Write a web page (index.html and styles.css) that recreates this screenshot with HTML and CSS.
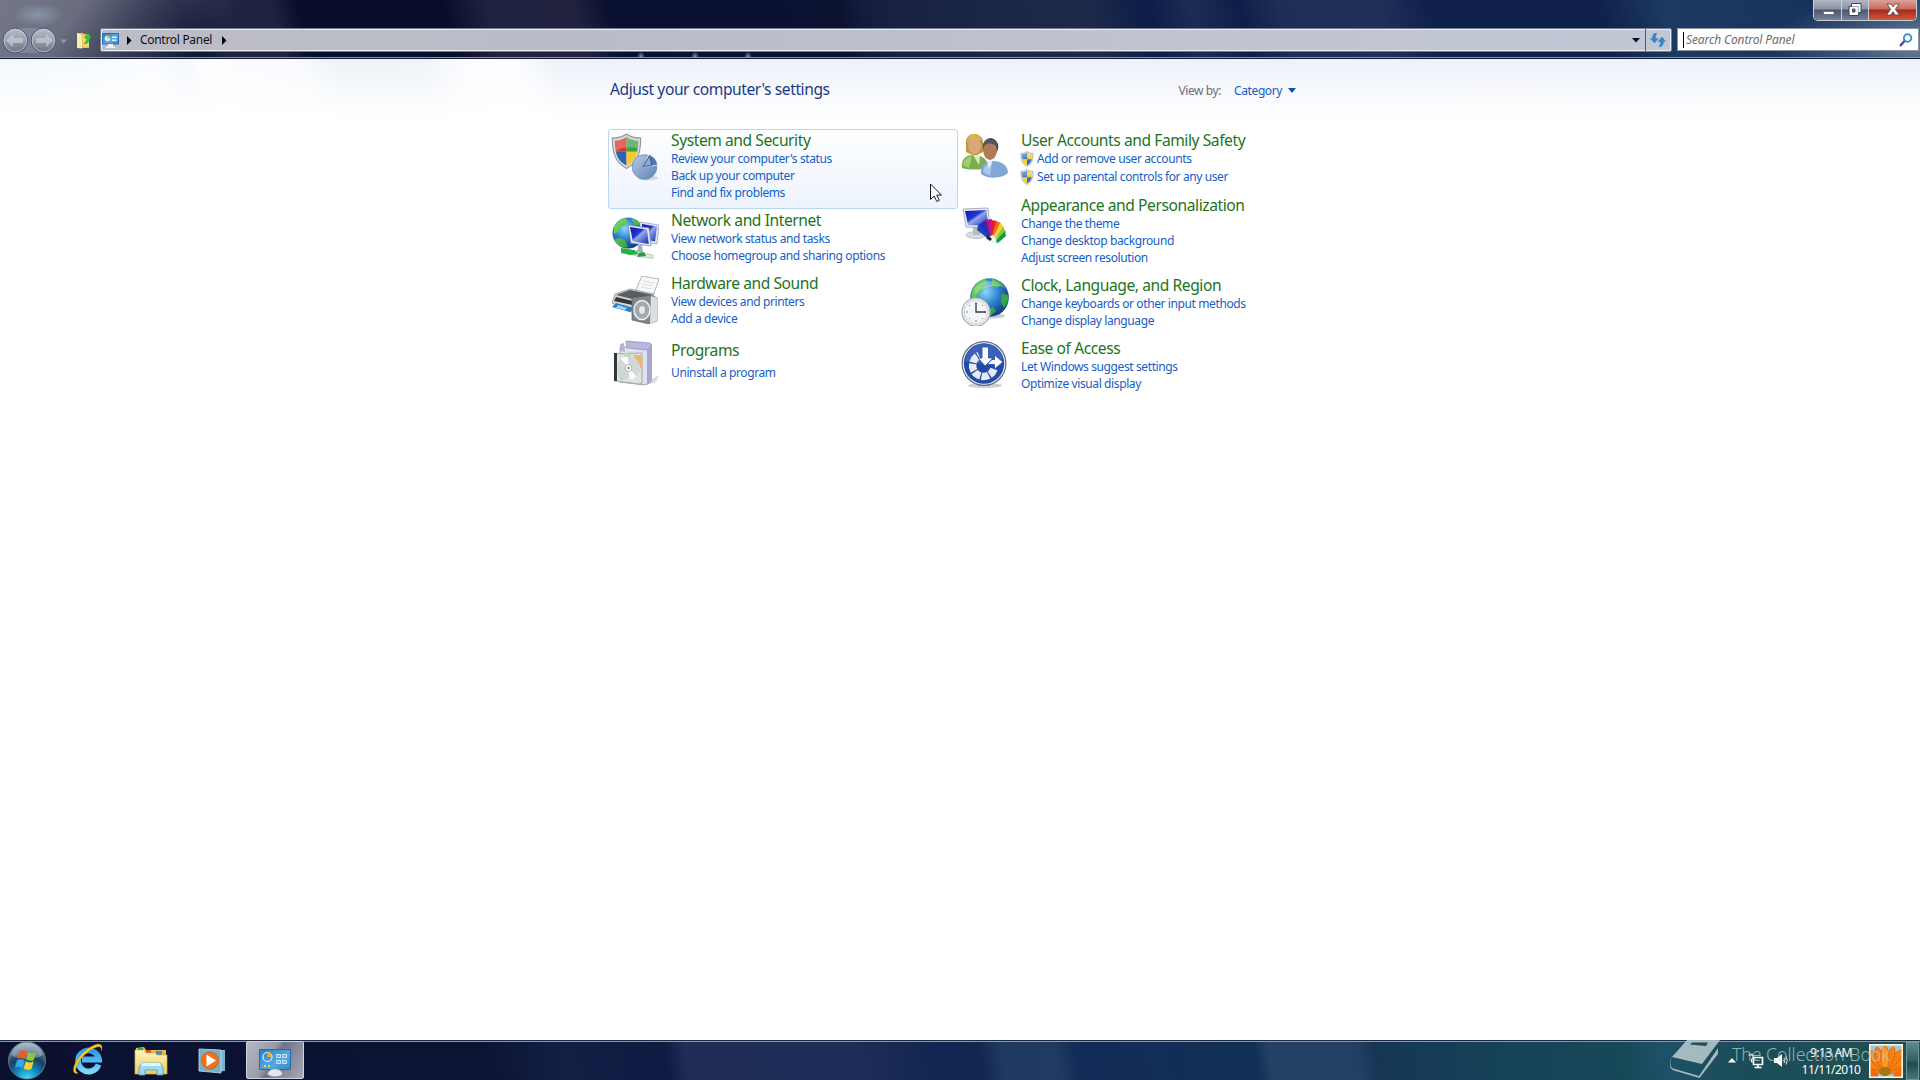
FILE: index.html
```
<!DOCTYPE html>
<html lang="en">
<head>
    <meta charset="UTF-8">
    <meta name="viewport" content="width=device-width, initial-scale=1.0">
    <title>Control Panel</title>
    <link rel="stylesheet" href="styles.css">
</head>
<body>
    <svg class="defs" width="0" height="0">
        <defs>
            <linearGradient id="steel" x1="0" y1="0" x2="0" y2="1">
                <stop offset="0" stop-color="#b9bfcb"/><stop offset=".45" stop-color="#9aa1b0"/><stop offset="1" stop-color="#6a7182"/>
            </linearGradient>
            <radialGradient id="globe" cx=".4" cy=".35" r=".65">
                <stop offset="0" stop-color="#8fd6fb"/><stop offset=".5" stop-color="#2f86cf"/><stop offset="1" stop-color="#123f86"/>
            </radialGradient>
            <linearGradient id="screen" x1="0" y1="0" x2="1" y2="1">
                <stop offset="0" stop-color="#0a1aa8"/><stop offset=".4" stop-color="#2038d0"/><stop offset=".5" stop-color="#93a8ee"/><stop offset="1" stop-color="#1226b4"/>
            </linearGradient>
            <linearGradient id="land" x1="0" y1="0" x2="1" y2="1">
                <stop offset="0" stop-color="#7fd96a"/><stop offset="1" stop-color="#1f8f3c"/>
            </linearGradient>
            <linearGradient id="pie" x1="0" y1="0" x2="1" y2="1">
                <stop offset="0" stop-color="#b9cce4"/><stop offset="1" stop-color="#5c80b4"/>
            </linearGradient>
            <linearGradient id="panel" x1="0" y1="0" x2="1" y2="1">
                <stop offset="0" stop-color="#2c7fc4"/><stop offset=".6" stop-color="#55aae2"/><stop offset="1" stop-color="#3186c8"/>
            </linearGradient>
            <radialGradient id="orb" cx=".5" cy="1" r="1">
                <stop offset="0" stop-color="#3fe0ff"/><stop offset=".35" stop-color="#1180b4"/><stop offset=".6" stop-color="#15405f"/><stop offset="1" stop-color="#93a7b5"/>
            </radialGradient>
            <linearGradient id="ie" x1="0" y1="0" x2="0" y2="1">
                <stop offset="0" stop-color="#2f9be4"/><stop offset="1" stop-color="#7ad6fa"/>
            </linearGradient>
            <linearGradient id="folder" x1="0" y1="0" x2="0" y2="1">
                <stop offset="0" stop-color="#fdf6bd"/><stop offset="1" stop-color="#edcb62"/>
            </linearGradient>
            <symbol id="shield" viewBox="0 0 30 36">
                <path d="M15 1C11 4 6 5 1 5c0 13 2 24 14 30C27 29 29 18 29 5 24 5 19 4 15 1z" fill="#d5d8d4" stroke="#8d928f"/>
                <path class="s1" d="M15 4C11 6.500 8 7.500 3.500 8c0 4 .3 7 1 10.500H15z"/>
                <path class="s2" d="M15 4c4 2.500 7 3.500 11.500 4 0 4-.3 7-1 10.500H15z"/>
                <path class="s3" d="M4.500 18.500C6 25 9 29 15 32V18.500z"/>
                <path class="s4" d="M25.500 18.500C24 25 21 29 15 32V18.500z"/>
                <path d="M3.500 8C8 7.500 11 6.500 15 4c4 2.500 7 3.500 11.500 4 0 3-.2 5-.5 7-8-2-15-1-22 3-.4-3-.5-6-.5-10z" fill="#fff" opacity=".25"/>
            </symbol>
        </defs>
    </svg>

    <header class="titlebar">
        <div class="caption">
            <div class="window-buttons">
                <span class="win-btn min">
                    <svg width="27" height="20" viewBox="0 0 27 20"><path d="M9.500 11.500h10.500v3h-10.500z" fill="#fff" stroke="#555d6c" stroke-width=".7"/></svg>
                </span>
                <span class="win-btn max">
                    <svg width="26" height="20" viewBox="0 0 26 20"><path d="M9.500 3.500h9.500v9h-2.500v3h-9.500v-9h2.500z" fill="#fff" stroke="#3f4757"/><path d="M10.500 9h2.500v3h-2.500z" fill="#6a7385" stroke="#3f4757"/><path d="M9.500 6.500h6.800v6" fill="none" stroke="#777f90" stroke-width=".7"/></svg>
                </span>
                <span class="win-btn close">
                    <svg width="47" height="20" viewBox="0 0 47 20"><path d="M18 4h4l2 2.800L26 4h4l-3.600 5.200L30.500 15h-4.300L24 11.800 21.800 15h-4.300l4.100-5.800z" fill="#fff" stroke="#60363c" stroke-width=".8"/></svg>
                </span>
            </div>
        </div>
        <div class="navbar">
            <svg class="nav-arrows" width="68" height="30" viewBox="0 0 68 30">
                <rect x="15" y="2" width="29" height="25" fill="#9db3c4" opacity=".35"/>
                <g stroke="#4c5365" stroke-width="1">
                    <circle cx="15.300" cy="14.500" r="12.300" fill="url(#steel)"/>
                    <circle cx="43.500" cy="14.500" r="12.300" fill="url(#steel)"/>
                </g>
                <circle cx="15.300" cy="14.500" r="11.300" fill="none" stroke="#c4cad5" stroke-width=".8"/>
                <circle cx="43.500" cy="14.500" r="11.300" fill="none" stroke="#c4cad5" stroke-width=".8"/>
                <path d="M6 14.500l7-6.500v4h10v5H13v4z" fill="#d2d6de" opacity=".6"/>
                <path d="M53 14.500L46 8v4H36v5h10v4z" fill="#d2d6de" opacity=".6"/>
                <path d="M60 13.500h7l-3.500 4z" fill="#8e95a8"/>
            </svg>
            <svg class="up-folder" width="16" height="18" viewBox="0 0 16 18">
                <path d="M1 2h6l1 1h5v14H1z" fill="#e5c557"/><path d="M1 2l5 2v13.500L1 17z" fill="#fbeea0"/><path d="M7 5h6v11H7z" fill="#f1d97a"/>
                <path d="M8 12.500c2-1 2.800-3 2.800-5.500H8.500L12 2l3.500 5H13.700c0 3.500-2 6-5.700 5.500z" fill="#3cc637" stroke="#1d981f" stroke-width=".5"/>
            </svg>
            <div class="address">
                <svg width="17" height="17" viewBox="0 0 17 17">
                    <path d="M.5 1.500h16v10.500H.5z" fill="url(#panel)" stroke="#2471ae"/><circle cx="5.500" cy="6.500" r="2.800" fill="#d9eefb"/><path d="M5.500 6.500V3.700A2.800 2.800 0 0 1 8.300 6.500z" fill="#f4a637"/>
                    <path d="M10 4.500h4.500v1.500H10zM10 7.500h4.500V9H10z" fill="#e6f4ff"/><path d="M6 12h5v2.500h2V16H4v-1.500h2z" fill="#eef1f3"/>
                </svg>
                <svg class="crumb" width="6" height="9" viewBox="0 0 6 9"><path d="M1 0l4.500 4.500L1 9z" fill="#000"/></svg>
                <span class="crumb-text">Control Panel</span>
                <svg class="crumb" width="6" height="9" viewBox="0 0 6 9"><path d="M1 0l4.500 4.500L1 9z" fill="#000"/></svg>
                <svg class="drop" width="8" height="5" viewBox="0 0 8 5"><path d="M0 0h8L4 4.500z" fill="#0a0d28"/></svg>
                <div class="refresh">
                    <svg width="16" height="14" viewBox="0 0 16 14"><path d="M4.800 0C2.500 2 2.500 3.500 2.700 5.500H.5l4 4.500L8 5.500H5.500C5.300 3 5.700 1.500 7 .5zM10.500 14c2.500-1.500 3-3.500 2.800-5.500h2.200L12 4 8 8.500h2.500c.3 2 0 3.500-1.500 4.700z" fill="#3587cd" stroke="#2b6da8" stroke-width=".4"/></svg>
                </div>
            </div>
            <div class="search">
                <span class="caret"></span>
                <span class="search-text">Search Control Panel</span>
                <svg width="14" height="14" viewBox="0 0 14 14"><path d="M1 13l5-5.500" stroke="#44509c" stroke-width="2.400"/><circle cx="8.600" cy="5" r="3.800" fill="#f0f9ff" stroke="#3c8cc4" stroke-width="1.800"/></svg>
            </div>
        </div>
    </header>

    <main class="content">
        <div class="heading">
            <h1>Adjust your computer's settings</h1>
            <div class="view-by">View by: <a class="category">Category</a>
                <svg width="8" height="5" viewBox="0 0 8 5"><path d="M0 0h8L4 5z" fill="#0b55a8"/></svg>
            </div>
        </div>

        <div class="columns">
            <div class="column">
                <section class="item hovered">
                    <svg class="icon" width="48" height="48" viewBox="0 0 48 48">
                        <ellipse cx="37" cy="45" rx="10" ry="2.500" fill="#c5cad2" opacity=".7"/>
                        <use class="shield-color" href="#shield" x="0" y="0" width="31" height="36.500"/>
                        <circle cx="33.500" cy="34" r="12.300" fill="url(#pie)" stroke="#6c89b1" stroke-width=".8"/>
                        <path d="M33 34l4.500-12c5 1 8.500 5 9 10z" fill="#4d73b0" stroke="#e3ecf6" stroke-width=".8"/>
                        <path d="M32 33.500l7-11 1.500 10z" fill="#8fabd2" stroke="#36578e" stroke-width=".9"/>
                    </svg>
                    <div class="texts">
                        <h2>System and Security</h2>
                        <a>Review your computer's status</a>
                        <a>Back up your computer</a>
                        <a>Find and fix problems</a>
                    </div>
                    <svg class="cursor" width="14" height="20" viewBox="0 0 14 20"><path d="M1.500 1v15.500l3.600-3.500 2.700 5.500 2.500-1.200-2.600-5.200h4.800z" fill="#fff" stroke="#1b1d2a"/></svg>
                </section>

                <section class="item">
                    <svg class="icon" width="48" height="48" viewBox="0 0 48 48">
                        <circle cx="17" cy="20" r="15.500" fill="url(#globe)"/>
                        <path d="M3 14C6 8 11 5 15 5l2 4-4 4-4 1-2 5-4 2zM7 25l7 2 3 7-5 1C8 33 5 30 3 27zM20 5.500c5 1 8 3 10 6l-6 1z" fill="url(#land)"/>
                        <path d="M29 9l19 3-2 19-17-3z" fill="#e3e7f1" stroke="#9299ad" stroke-width=".7"/><path d="M31 11l15 2.500-2 15-13-2.500z" fill="url(#screen)"/>
                        <path d="M17 12l21 3 2 18-20-3z" fill="#eceff8" stroke="#858ba2" stroke-width=".8"/><path d="M19 14l17 2.500 1.800 14.500-16-2.500z" fill="url(#screen)"/>
                        <path d="M27 31v6l-7 2h12l-1-7z" fill="#a4aeb8"/>
                        <path d="M13 36l29 6v3.500L30 44l-15-4z" fill="#dfe8df" stroke="#a6b1a6" stroke-width=".6"/><path d="M10 35l13 2 5 4-9 1-9-2z" fill="#24b343"/><path d="M28 40l5-1 2 4-9 1z" fill="#1fa03b"/>
                    </svg>
                    <div class="texts">
                        <h2>Network and Internet</h2>
                        <a>View network status and tasks</a>
                        <a>Choose homegroup and sharing options</a>
                    </div>
                </section>

                <section class="item">
                    <svg class="icon" width="48" height="48" viewBox="0 0 48 48">
                        <path d="M31 0l17 3-6 17-18-4z" fill="#f7f7f8" stroke="#a3a3a6" stroke-width=".8"/>
                        <path d="M32 5l11 2M31 8l11 2M30 11l10 2" stroke="#ddd"/>
                        <path d="M4 18l15-5 24 5-2 10-22 8L1 27z" fill="#d3d5d7" stroke="#85888b" stroke-width=".7"/>
                        <path d="M5 19l14-5 22 4.500-14 6z" fill="#5a5d61"/><path d="M5 21l21 5v4L3 25z" fill="#33373d"/>
                        <path d="M5 27l18 5-4 4-18-5z" fill="#2a7fc5"/><path d="M7 29l9 3-2 2-9-2z" fill="#9bd6ee"/>
                        <path d="M21 22l19-3 6 3v23l-8 3-17-4z" fill="#81868b" stroke="#5a5e63" stroke-width=".7"/><path d="M40 20l6 2v23l-7 3z" fill="#dcdee0"/>
                        <ellipse cx="31" cy="34" rx="8" ry="9.500" fill="#a5aaae" stroke="#eceeef" stroke-width="1.500"/><ellipse cx="31" cy="34" rx="3.500" ry="4.500" fill="#e6e8e9" stroke="#999"/>
                    </svg>
                    <div class="texts">
                        <h2>Hardware and Sound</h2>
                        <a>View devices and printers</a>
                        <a>Add a device</a>
                    </div>
                </section>

                <section class="item programs">
                    <svg class="icon" width="48" height="48" viewBox="0 0 48 48">
                        <path d="M34 44l14-8-3 7-9 3z" fill="#c9cbd0" opacity=".7"/>
                        <path d="M9 8l31-1v36l-6 3-25-3z" fill="#dfe0f1" stroke="#a1a2bf"/><path d="M36 9l5-4v36l-5 5z" fill="#a6a7cc"/>
                        <path d="M9 5l4-1 1 9-5-1z" fill="#b4b5cf"/><path d="M15 2l24 2 2 2-4 5-21-2z" fill="#b8b7e0" stroke="#8b8bb3" stroke-width=".7"/>
                        <path d="M4 15l27-1v30l-3 1-24-3z" fill="#dfe5e2" stroke="#9eaaa5" opacity=".95"/><path d="M3 14h3v28H3z" fill="#33373a"/>
                        <path d="M22 16h9v16z" fill="#f2b66b"/><path d="M14 14l6-1-1 9-6 4zM7 34l6-4 4 8-7 4z" fill="#b9d9ab"/>
                        <circle cx="17.500" cy="29" r="11.500" fill="#d2d5d7" opacity=".9"/><path d="M17.500 29L10 20a11.500 11.500 0 0 1 7-2.500zM17.500 29l8 8.500a11 11 0 0 1-7 3z" fill="#fff"/>
                        <circle cx="17.500" cy="29" r="3.500" fill="#fafafa" stroke="#b0b3b6"/><circle cx="17.500" cy="29" r="1.200" fill="#888"/>
                    </svg>
                    <div class="texts">
                        <h2>Programs</h2>
                        <a>Uninstall a program</a>
                    </div>
                </section>
            </div>

            <div class="column">
                <section class="item shields">
                    <svg class="icon" width="48" height="48" viewBox="0 0 48 48">
                        <path d="M5 12C4 5 8 1 13 1s9 3 9 8c0 6 0 8 0 10l-8 4-9-4z" fill="#b89a3c"/><ellipse cx="13.500" cy="12.500" rx="6.500" ry="8.500" fill="#dda57c"/>
                        <path d="M6 10c3-5 10-5 15-2 0-4-3-7-8-7s-7 4-7 9z" fill="#d0b455"/>
                        <path d="M1 35c-1-8 3-13 11-13s15 3 15 13c-7 2-20 2-26 0z" fill="#7cae4f"/><path d="M2 32c1-6 4-8 9-9l-3 12z" fill="#a1cd72"/><path d="M12 22h7l-1 10z" fill="#d9edc6"/>
                        <ellipse cx="29.500" cy="14" rx="7.800" ry="9" fill="#45454a"/><ellipse cx="29" cy="17.500" rx="6.800" ry="9.500" fill="#b07b56"/><path d="M22 14c3-4 9-5 14 0 0-5-3-8-7-8s-7 3-7 8z" fill="#55565b"/>
                        <path d="M20 41c-1-8 4-13 12-13s15 4 15 12c-6 6-21 6-27 1z" fill="#7fa8d5"/><path d="M22 39c1-6 4-9 9-10l-2 14z" fill="#a9c8e9"/><path d="M26 28l6-1-4 9z" fill="#e3eefa"/>
                    </svg>
                    <div class="texts">
                        <h2>User Accounts and Family Safety</h2>
                        <a><svg class="uac" width="14" height="16"><use href="#shield"/></svg>Add or remove user accounts</a>
                        <a><svg class="uac" width="14" height="16"><use href="#shield"/></svg>Set up parental controls for any user</a>
                    </div>
                </section>

                <section class="item appearance">
                    <svg class="icon" width="48" height="48" viewBox="0 0 48 48">
                        <ellipse cx="15" cy="30" rx="10" ry="3.500" fill="#d9dbde" stroke="#aeb1b6" stroke-width=".7"/><path d="M12 22h7v8h-7z" fill="#b8bbc0"/>
                        <path d="M2 4l25-1 2 20-24-1z" fill="#e9ebf0" stroke="#989ca8" stroke-width=".8"/><path d="M4 6l21.500-1L27 21 7 20z" fill="url(#screen)"/>
                        <path d="M30 34L17 20l5-3z" fill="#1633c4"/><path d="M30 35l-9-18 6-3z" fill="#4e1ea3"/><path d="M30 35l-5-20 6-1z" fill="#b51697"/><path d="M30 35l0-20 6 1z" fill="#e0212c"/><path d="M30 36l5-20 5 2z" fill="#ef6b1d"/><path d="M31 36l8-18 4 4z" fill="#f3d32b"/><path d="M32 36l10-14 3 5z" fill="#89cc33"/><path d="M33 37l11-11 1 5-8 7z" fill="#199946"/>
                        <path d="M17 20l-1 5 14 11 2-3z" fill="#1945b8"/><path d="M27 32l5-2 4 7-4 1-6-3z" fill="#f2f2f5"/><path d="M27 30l4 4-2 2-4-3z" fill="#202637"/>
                    </svg>
                    <div class="texts">
                        <h2>Appearance and Personalization</h2>
                        <a>Change the theme</a>
                        <a>Change desktop background</a>
                        <a>Adjust screen resolution</a>
                    </div>
                </section>

                <section class="item">
                    <svg class="icon" width="48" height="48" viewBox="0 0 48 48">
                        <ellipse cx="32" cy="38" rx="12" ry="2.500" fill="#c8ccd1"/>
                        <circle cx="28.500" cy="19.500" r="19.300" fill="url(#globe)"/>
                        <path d="M11 14c2-7 7-11 13-13l4 5-5 2-2 6-5 3-2 5-4 1zM31 1c6 1 10 4 13 9l-5-2-4 2-4-3zM41 16l6 1c1 5-1 10-4 13l-3-6zM24 32l8-3 3 4-6 5z" fill="url(#land)"/>
                        <path d="M14 10c7-9 20-9 26-2-8 0-18 1-26 8z" fill="#fff" opacity=".25"/>
                        <circle cx="15" cy="34" r="14" fill="#e9ecee" stroke="#a9afb4" stroke-width="1.200"/><circle cx="15" cy="34" r="11.800" fill="#f4f5f6" stroke="#cfd4d8"/>
                        <path d="M15 24v2M15 42v2M5 34h2M23 34h2M8 27l1 1M22 27l-1 1M8 41l1-1M22 41l-1-1" stroke="#7c8288"/>
                        <path d="M15 25v9h10" fill="none" stroke="#333d4b" stroke-width="1.300"/>
                    </svg>
                    <div class="texts">
                        <h2>Clock, Language, and Region</h2>
                        <a>Change keyboards or other input methods</a>
                        <a>Change display language</a>
                    </div>
                </section>

                <section class="item">
                    <svg class="icon" width="48" height="48" viewBox="0 0 48 48">
                        <ellipse cx="24" cy="44.500" rx="17" ry="2.500" fill="#b5bbc6" opacity=".7"/>
                        <circle cx="23" cy="22.500" r="21.900" fill="#eceef2" stroke="#626c82" stroke-width="1.200"/><circle cx="23" cy="22.500" r="20.200" fill="#244aa8"/>
                        <path d="M4 20C5 10 13 3 23 3s18 7 19 15c-11 5-26 6-38 2z" fill="#5577c8" opacity=".5"/>
                        <path d="M33 28A11 11 0 1 1 18 14.500" fill="none" stroke="#e6eaf2" stroke-width="7.500" stroke-dasharray="7.200 1.200"/>
                        <path d="M21 6h6.500v11H32l-7.800 8L17 17h4z" fill="#fafbfd" stroke="#244aa8" stroke-width=".8"/>
                        <path d="M26 23.500l5-5h2.500V14l8.500 7-8.500 7v-4.500z" fill="#fafbfd" stroke="#244aa8" stroke-width=".8"/>
                    </svg>
                    <div class="texts">
                        <h2>Ease of Access</h2>
                        <a>Let Windows suggest settings</a>
                        <a>Optimize visual display</a>
                    </div>
                </section>
            </div>
        </div>
    </main>

    <footer class="taskbar">
        <div class="start">
            <svg width="40" height="39" viewBox="0 0 40 39">
                <circle cx="20" cy="19.500" r="18.500" fill="url(#orb)" stroke="#70889a" stroke-width=".8"/>
                <path d="M4 14C7 5 13 2 20 2s13 3 16 12c-9 5-23 5-32 0z" fill="#fff" opacity=".3"/>
                <path d="M12.500 10.500c2.500-1.700 5-1.500 7.500.2l-2 7.500c-2.500-1.500-5-1.700-7.700-.4z" fill="#ee5a26"/>
                <path d="M21 11.300c2.600 1.400 5.200 1.500 8 .2l-2.200 7.400c-2.600 1.300-5.200 1-7.700-.3z" fill="#8cc63f"/>
                <path d="M10 19.300c2.600-1.400 5.200-1.200 7.700.3l-2 7.400c-2.500-1.500-5-1.700-7.700-.3z" fill="#3aa5e5"/>
                <path d="M18.700 20.200c2.600 1.500 5.200 1.600 7.900.3L24.500 28c-2.700 1.300-5.300 1.100-7.800-.3z" fill="#fccf29"/>
            </svg>
        </div>
        <div class="task ie">
            <svg width="32" height="32" viewBox="0 0 32 32">
                <path d="M26.500 21.500A10.500 10.500 0 1 1 27 16.500H10" fill="none" stroke="url(#ie)" stroke-width="5.800"/>
                <path d="M6 30C1 32 0 26 4 19 9 10 19 2 26 1c4 0 5 3 3 7 1-4-1-5-4-4C18 6 10 13 6 20c-3 5-3 9 0 10z" fill="#f9cb28" stroke="#c48e0c" stroke-width=".4"/>
            </svg>
        </div>
        <div class="task explorer">
            <svg width="34" height="32" viewBox="0 0 34 32">
                <path d="M2 3l8-1 2 3h20v24H2z" fill="#e6ba4c"/><path d="M4 3h5v4H4z" fill="#2c9c49"/><path d="M12 5h5v3h-5z" fill="#e1512b"/><path d="M22 6h6v4h-6z" fill="#398fcb"/>
                <path d="M1 5h9l2 3h9l2 2h10v19H1z" fill="url(#folder)" stroke="#d5b04b" stroke-width=".7"/>
                <path d="M8 18h18l3 4v8h-6v-5H11v5H5v-8z" fill="#9cd8ef" stroke="#559dbb" stroke-width=".8"/><path d="M8 18h18l1 3H7z" fill="#dff5fc"/>
            </svg>
        </div>
        <div class="task wmp">
            <svg width="28" height="27" viewBox="0 0 28 27">
                <path d="M9 2h18v21H9z" fill="#9ec9dc"/><path d="M24 2v22M26 3v20" stroke="#5f9ab5"/><path d="M1 1l22 1v23L1 23z" fill="#79aec9" stroke="#c2e0eb" stroke-width=".8"/>
                <circle cx="12" cy="12.500" r="8.600" fill="#ee711b" stroke="#cd5710" stroke-width=".7"/><path d="M8.500 6.500l9.500 6-9.500 6z" fill="#fff"/>
            </svg>
        </div>
        <div class="task active">
            <svg width="34" height="30" viewBox="0 0 34 30">
                <path d="M1.500 1.500h31v20h-31z" fill="url(#panel)" stroke="#226ca9"/>
                <circle cx="9.500" cy="9" r="4.500" fill="none" stroke="#dff1fb" stroke-width="1.200"/><path d="M9.500 9V4a5 5 0 0 1 4.500 5z" fill="#f6ac32"/>
                <path d="M18.500 6.500h4v3h-4zM24.500 6.500h4v3h-4zM18.500 12.500h4v3h-4zM24.500 12.500h4v3h-4z" fill="#69b4e5" stroke="#e4f4ff" stroke-width=".8"/>
                <path d="M6 17h2v2H6zM10 17h2v2h-2z" fill="#fbd34b"/><path d="M9.500 26c1.500-4 4-5 7.500-5s6 1 7.500 5c-3 3.500-12 3.500-15 0z" fill="#e5e7e9" stroke="#9b9ea3" stroke-width=".7"/>
            </svg>
        </div>
        <div class="tray">
            <svg class="tray-up" width="8" height="5" viewBox="0 0 8 5"><path d="M4 0l4 4.500H0z" fill="#fff"/></svg>
            <svg class="net" width="17" height="16" viewBox="0 0 17 16"><path d="M5.500 4.500h9v7h-9zM10 11.500V14M6.500 14.500h7" fill="none" stroke="#fff" stroke-width="1.600"/><path d="M.5 2h4.500v4H3.500v3H5M1.500 2V.5M4 2V.5" fill="none" stroke="#fff"/></svg>
            <svg class="volume" width="17" height="15" viewBox="0 0 17 15"><path d="M1 5h3l5-4v13l-5-4H1z" fill="#fff"/><path d="M11 5q1.500 2.500 0 5M13 3.500q2.500 4 0 8" fill="none" stroke="#dfe9eb"/></svg>
            <div class="clock"><span>9:13 AM</span><span>11/11/2010</span></div>
            <svg class="avatar" width="34" height="34" viewBox="0 0 34 34">
                <path d="M0 0h34v34H0z" fill="#a9c4c9"/>
                <g fill="#f6820f" stroke="#dc560c" stroke-width=".7">
                    <ellipse cx="16" cy="13" rx="3.800" ry="13" transform="rotate(-85 16 27)"/><ellipse cx="16" cy="13" rx="3.800" ry="13" transform="rotate(85 16 27)"/>
                    <ellipse cx="16" cy="12" rx="4" ry="13" transform="rotate(-62 16 27)"/><ellipse cx="16" cy="12" rx="4" ry="13" transform="rotate(62 16 27)"/>
                    <ellipse cx="16" cy="13" rx="4" ry="13" transform="rotate(-40 16 27)"/><ellipse cx="16" cy="13" rx="4" ry="13" transform="rotate(40 16 27)"/>
                    <ellipse cx="16" cy="14" rx="4" ry="12" transform="rotate(-20 16 27)"/><ellipse cx="16" cy="14" rx="4" ry="12" transform="rotate(20 16 27)"/>
                    <ellipse cx="16" cy="14" rx="4" ry="12" fill="#fc9a1c"/>
                </g>
                <path d="M1 34V22l8 8v4zM33 34V22l-8 8v4z" fill="#f36c10"/>
                <ellipse cx="16" cy="27.500" rx="5.500" ry="4.500" fill="#a8740f"/><path d="M.8 .8h32.400v32.400H.8z" fill="none" stroke="#fff4d8" stroke-width="1.600"/>
            </svg>
            <div class="show-desktop"></div>
        </div>
    </footer>

    <div class="watermark">
        <svg width="50" height="42" viewBox="0 0 50 42">
            <path d="M17 3h33L32 27 2 20z" fill="#b9c9cd"/><path d="M3 19C-1 25 0 30 3 31.500l26 7.500L48 11v6L29.500 41 4 33.500C-1.500 31-1.500 25 3 19z" fill="#b9c9cd"/>
            <path d="M22 5.500h16l-2 3.500-16-1.500z" fill="#254f5b"/>
        </svg>
        <span>The Collection Book</span>
    </div>
</body>
</html>
```
FILE: styles.css
```
* {
    box-sizing: border-box;
}
body {
    margin: 0;
    width: 1920px;
    height: 1080px;
    overflow: hidden;
    display: flex;
    flex-direction: column;
    font-family: "Noto Sans", "Open Sans", sans-serif;
    font-size: 12px;
    background: #fff;
}
svg {
    display: block;
    flex: none;
}
.defs {
    position: absolute;
}
/* window frame */
.titlebar {
    height: 59px;
    border-bottom: 1px solid #0c1638;
    box-shadow: inset 0 -1px 0 #8b92a6;
    background:
        radial-gradient(ellipse 26px 12px at 38px 15px, rgba(150, 175, 190, .6), transparent),
        radial-gradient(ellipse 4px 7px at 641px 58px, rgba(190, 195, 225, .8), transparent),
        radial-gradient(ellipse 4px 7px at 695px 58px, rgba(190, 195, 225, .8), transparent),
        radial-gradient(ellipse 4px 7px at 748px 58px, rgba(190, 195, 225, .8), transparent),
        radial-gradient(ellipse 150px 50px at 1920px 45px, rgba(150, 170, 190, .6), transparent),
        linear-gradient(125deg, #747789 0, #6a6d80 70px, rgba(80, 84, 105, .75) 120px, rgba(40, 44, 72, 0) 200px),
        linear-gradient(75deg, #0a0f30 0, #0a0f30 185px, #1f2342 225px, #20233f 275px, #090e2c 300px, #080d2b 440px, #20233f 485px, #1f213d 570px, #0a1030 600px, #0a1230 820px, #17213f 860px, #1f2a4a 1060px, #0d1d48 1120px, #1c2c54 1165px, #0d1e48 1210px, #1e2f57 1250px, #1f3158 1345px, #10214d 1390px, #10224b 1560px, #1c3a61 1620px, #17325a 1800px, #2e4c70 1920px);
}
.caption {
    height: 28px;
    display: flex;
    justify-content: flex-end;
    padding-right: 3px;
}
.window-buttons {
    display: flex;
    height: 21px;
    border: 1px solid #c8ced8;
    border-top: 0;
    border-radius: 0 0 5px 5px;
    overflow: hidden;
}
.win-btn {
    border-right: 1px solid #c8ced8;
    background: linear-gradient(#b1b6c2, #8b93a4 45%, #4c566d 50%, #76839a);
}
.close {
    border-right: 0;
    background: linear-gradient(#dca197, #c86a5d 45%, #a9261c 50%, #cf5a3c);
}
.navbar {
    height: 24px;
    display: flex;
}
.nav-arrows {
    margin-top: -2px;
}
.up-folder {
    margin: 3px 16px 0 8px;
}
.address {
    width: 1572px;
    margin-left: -8px;
    height: 24px;
    display: flex;
    align-items: center;
    border: 1px solid #777e90;
    border-radius: 2px;
    box-shadow: inset 0 0 0 1px #e9ebf0;
    padding-left: 1px;
    background: linear-gradient(90deg, #bcbdc6, #b9bcc6 30%, #bbbfc9 45%, #c0c4d0 70%, #c1c7d4);
}
.crumb {
    margin-left: 7px;
}
.crumb-text {
    margin-left: 8px;
    width: 73px;
    white-space: nowrap;
    letter-spacing: -.3px;
    line-height: 22px;
    color: #101018;
}
.crumb-text + .crumb {
    margin-left: 8px;
}
.drop {
    margin-left: auto;
    margin-right: 5px;
}
.refresh {
    width: 26px;
    height: 22px;
    padding: 4px 4px;
    border-left: 1px solid #555b70;
}
.search {
    width: 242px;
    margin-left: 5px;
    height: 23px;
    display: flex;
    align-items: center;
    border: 1px solid #8c95a6;
    background: #fff;
    padding: 0 5px;
}
.caret {
    width: 1px;
    height: 16px;
    background: #000;
    margin-right: 2px;
}
.search-text {
    flex: 1;
    font-style: italic;
    color: #6d6d6d;
    letter-spacing: -.12px;
}
/* page */
.content {
    height: 981px;
    background:
        linear-gradient(rgba(255, 255, 255, 0), #fff 60px),
        linear-gradient(75deg, #edf3f9 0, #f8fbfe 375px, #fbfcff 400px, #f3f7fb 430px, #fcfdff 450px, #f8fafd 540px, #edf2f7 580px, #eff3f8 660px, #fbfcff 700px, #fcfdff 750px, #edf1f8 790px, #eef2f9 1900px);
}
.heading {
    height: 70px;
    padding: 18px 624px 0 610px;
    display: flex;
    justify-content: space-between;
}
h1, h2 {
    margin: 0;
    font-weight: 400;
}
h1 {
    font-size: 15.6px;
    line-height: 24px;
    color: #1a3a86;
    letter-spacing: -.43px;
}
.view-by {
    display: flex;
    align-items: center;
    height: 26px;
    color: #6a6f80;
    letter-spacing: -.4px;
}
.category {
    margin: 0 6px 0 13px;
}
a {
    color: #1560c4;
}
.columns {
    display: flex;
    padding-left: 608px;
}
.column {
    width: 350px;
}
.item {
    display: flex;
    padding: 0 1px 7px 2px;
    border: 1px solid transparent;
}
.hovered {
    position: relative;
    border-color: #b9d7f0;
    border-radius: 3px;
    background: linear-gradient(#fdfeff, #eef4fd);
}
.icon {
    margin: 3px 12px -7px 0;
}
.texts {
    white-space: nowrap;
    letter-spacing: -.39px;
}
.texts h2 {
    font-size: 15.6px;
    line-height: 20px;
    color: #1c7420;
    letter-spacing: -.43px;
}
.texts a {
    display: block;
    line-height: 17px;
}
.texts a:first-of-type {
    margin-top: 0;
}
.item.shields a {
    display: flex;
    align-items: center;
    line-height: 18px;
}
.uac {
    margin: 0 3px 0 -1px;
}
.programs .texts {
    padding-top: 4px;
}
.programs h2 {
    margin-bottom: 4px;
}
.appearance .icon {
    margin-top: 10px;
}
.cursor {
    position: absolute;
    left: 320px;
    top: 53px;
}
/* shield quarters */
.s1 {
    fill: var(--q1, #3573be);
}
.s2 {
    fill: var(--q2, #f3cf3b);
}
.s3 {
    fill: var(--q3, #f3cf3b);
}
.s4 {
    fill: var(--q4, #3573be);
}
.shield-color {
    --q1: #d8352b;
    --q2: #3fa043;
    --q3: #2f62b5;
    --q4: #f5cb2e;
}
/* taskbar */
.taskbar {
    height: 40px;
    display: flex;
    border-top: 1px solid #1e2b45;
    box-shadow: inset 0 1px 0 #8697a8;
    background: linear-gradient(80deg, #0b102f 0, #0c1434 480px, #131f45 560px, #0e1b42 660px, #202d56 680px, #1d2d58 850px, #10254f 930px, #122650 970px, #203961 990px, #213a61 1045px, #122b57 1065px, #123055 1240px, #244065 1255px, #243f64 1340px, #163656 1360px, #154258 1480px, #174858 1600px, #1d5167 1640px, #1b4d58 1720px, #1d5050 1920px);
}
.start {
    padding-left: 7px;
    width: 72px;
}
.task {
    height: 38px;
}
.ie {
    width: 62px;
    padding-top: 2px;
}
.explorer {
    width: 64px;
    padding-top: 4px;
}
.wmp {
    width: 48px;
    padding: 7px 0 0;
}
.active {
    width: 58px;
    padding: 6px 11px;
    border: 1px solid #d2d5dc;
    border-radius: 2px;
    background: linear-gradient(120deg, #b6b8c2 0, #989ba9 40%, #70748a 50%, #a7aab6);
}
.tray {
    margin-left: auto;
    display: flex;
    align-items: center;
    color: #fff;
    padding-right: 1px;
}
.tray-up {
    margin-right: 12px;
}
.net {
    margin-right: 8px;
}
.clock {
    display: flex;
    flex-direction: column;
    align-items: center;
    width: 64px;
    margin: 0 6px 0 9px;
    line-height: 17px;
    letter-spacing: -.5px;
}
.show-desktop {
    width: 13px;
    height: 38px;
    margin-left: 3px;
    border: 1px solid #6e9598;
    background: linear-gradient(#618688, #2e5e60 50%, #1c4c50 55%, #477376);
}
.watermark {
    position: absolute;
    left: 1670px;
    top: 1037px;
    display: flex;
    opacity: .88;
}
.watermark span {
    margin: 3px 0 0 12px;
    font-size: 17.6px;
    line-height: 28px;
    font-weight: 300;
    color: #bccdd0;
    opacity: .85;
    white-space: nowrap;
}
```
